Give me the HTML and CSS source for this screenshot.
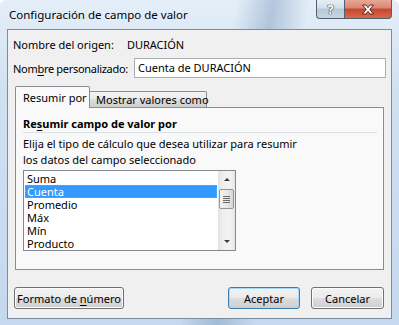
FILE: index.html
```html
<!DOCTYPE html>
<html lang="es">
<head>
    <meta charset="UTF-8">
    <title>Configuración de campo de valor</title>
    <link rel="stylesheet" href="styles.css">
</head>
<body>
  <div class="window">
    <div class="titlebar">
      <span class="title">Configuración de campo de valor</span>
      <div class="caption">
        <div class="cap help">?</div>
        <div class="cap close">
          <svg width="14" height="11" viewBox="0 0 14 11">
            <path d="M1.5 1 L5 1 L7 3.6 L9 1 L12.5 1 L8.8 5.5 L12.5 10 L9 10 L7 7.4 L5 10 L1.5 10 L5.2 5.5 Z" fill="#fff" stroke="#5a2a22" stroke-width="1"/>
          </svg>
        </div>
      </div>
    </div>

    <div class="client">
      <div class="row origin">
        <span>Nombre del origen:</span>
        <span class="value">DURACIÓN</span>
      </div>
      <div class="row custom">
        <span class="label">Nom<u>b</u>re personalizado:</span>
        <div class="input">Cuenta de DURACIÓN</div>
      </div>

      <div class="tabbox">
        <div class="tabs">
          <div class="tab active">Resumir por</div>
          <div class="tab">Mostrar valores como</div>
        </div>
        <div class="panel">
          <div class="heading"><span>Re<u>s</u>umir campo de valor por</span></div>
          <p class="desc">Elija el tipo de cálculo que desea utilizar para resumir<br>los datos del campo seleccionado</p>
          <div class="list">
            <ul class="items">
              <li>Suma</li>
              <li class="selected">Cuenta</li>
              <li>Promedio</li>
              <li>Máx</li>
              <li>Mín</li>
              <li>Producto</li>
            </ul>
            <div class="scrollbar">
              <div class="arrow up"></div>
              <div class="track">
                <div class="thumb"><span></span><span></span><span></span><span></span></div>
              </div>
              <div class="arrow down"></div>
            </div>
          </div>
        </div>
      </div>

      <div class="buttons">
        <div class="btn format"><span>Formato de <u>n</u>úmero</span></div>
        <div class="btn ok">Aceptar</div>
        <div class="btn cancel">Cancelar</div>
      </div>
    </div>
  </div>
</body>
</html>
```

FILE: styles.css
```css
body {
  margin: 0;
  padding: 0;
  font-family: "Noto Sans", "Segoe UI", sans-serif;
  font-size: 11px;
  color: #000;
  white-space: nowrap;
}

u {
  text-underline-offset: 2px;
}

.window {
  width: 399px;
  height: 325px;
  box-sizing: border-box;
  padding: 0 7px 6px;
  display: flex;
  flex-direction: column;
  border-radius: 6px 6px 0 0;
  background:
    linear-gradient(100deg, rgba(255,255,255,0) 52%, rgba(120,150,185,0.45) 60%, rgba(255,255,255,0) 68%),
    linear-gradient(180deg, #e4eef8 0%, #cfe0f1 30%, #c4d8ee 100%);
}

/* title bar */
.titlebar {
  height: 29px;
  display: flex;
  align-items: center;
}

.title {
  padding-left: 2px;
  padding-bottom: 1px;
  font-size: 11.5px;
}

.caption {
  margin-left: auto;
  align-self: flex-start;
  display: flex;
}

.cap {
  height: 19px;
  box-sizing: border-box;
  border: 1px solid #50606f;
  border-top: none;
  display: flex;
  align-items: center;
  justify-content: center;
}

.help {
  width: 28px;
  border-radius: 0 0 0 4px;
  border-right: none;
  background: linear-gradient(#e6eef7 0%, #d3dfeb 45%, #b7c8da 50%, #c8d6e4 100%);
  color: #fff;
  font-weight: bold;
  font-size: 13px;
  text-shadow: 0 0 1px #333, 0 0 1px #333, 0 0 1px #333;
}

.close {
  width: 48px;
  border-radius: 0 0 4px 0;
  background: linear-gradient(#e8a796 0%, #d98672 45%, #c8442c 50%, #d66a4c 100%);
}

/* client area */
.client {
  flex: 1;
  border: 1px solid #7a8c9f;
  background: #f0f0f0;
  padding: 6px 7px 8px 5px;
  display: flex;
  flex-direction: column;
}

.row {
  display: flex;
  align-items: center;
}

.origin {
  height: 16px;
}

.origin .value {
  margin-left: 13px;
}

.custom {
  margin-top: 6px;
  margin-right: -2px;
}

.custom .label {
  letter-spacing: -0.3px;
}

.input {
  margin-left: auto;
  flex-shrink: 0;
  width: 252px;
  height: 20px;
  box-sizing: border-box;
  border: 1px solid #abadb3;
  background: #fff;
  padding-left: 3px;
  line-height: 18px;
}

/* tabs */
.tabbox {
  margin-top: 8px;
  margin-left: 2px;
}

.tabs {
  display: flex;
  align-items: flex-end;
  height: 21px;
}

.tab {
  box-sizing: border-box;
  border: 1px solid #898c95;
  border-bottom: none;
}

.tab.active {
  position: relative;
  z-index: 1;
  width: 75px;
  height: 22px;
  margin-bottom: -1px;
  background: #f9f9f9;
  padding: 3px 0 0 7px;
  border-radius: 2px 2px 0 0;
}

.tab:not(.active) {
  width: 117px;
  height: 16px;
  border-left: none;
  padding-left: 6px;
  line-height: 15px;
  background: linear-gradient(#f3f3f3 0%, #ebebeb 50%, #dddddd 50%, #cfcfcf 100%);
  border-radius: 0 2px 0 0;
}

.panel {
  height: 163px;
  box-sizing: border-box;
  border: 1px solid #898c95;
  background: #f9f9f9;
  padding: 8px 6px 0 7px;
}

.heading {
  font-weight: bold;
  line-height: 16px;
  border-bottom: 1px solid #d8e1e8;
}

.desc {
  margin: 3px 0 0;
  line-height: 16px;
}

/* listbox */
.list {
  display: flex;
  width: 213px;
  height: 81px;
  box-sizing: border-box;
  margin-top: 2px;
  border: 1px solid #828790;
  background: #fff;
}

.items {
  flex: 1;
  list-style: none;
  margin: 0;
  padding: 1px;
}

.items li {
  height: 13px;
  line-height: 13px;
  padding-left: 2px;
}

.items li.selected {
  background: #3399ff;
  color: #fff;
  outline: 1px dotted #e0902c;
  outline-offset: -1px;
}

.scrollbar {
  width: 17px;
  display: flex;
  flex-direction: column;
  background: linear-gradient(90deg, #e2e2e2 0%, #efefef 30%, #f2f2f2 70%, #e6e6e6 100%);
}

.arrow {
  height: 17px;
  display: flex;
  align-items: center;
  justify-content: center;
}

.arrow::before {
  content: "";
  border-left: 3px solid transparent;
  border-right: 3px solid transparent;
}

.arrow.up::before {
  border-bottom: 3px solid #3c3c3c;
}

.arrow.down::before {
  border-top: 3px solid #3c3c3c;
}

.track {
  flex: 1;
}

.thumb {
  width: 15px;
  height: 20px;
  margin: 1px 0 0 1px;
  box-sizing: border-box;
  border: 1px solid #959595;
  border-radius: 2px;
  background: linear-gradient(90deg, #f3f3f3 0%, #e8e8e8 50%, #d6d6d6 100%);
  display: flex;
  flex-direction: column;
  justify-content: center;
  align-items: center;
  gap: 1px;
}

.thumb span {
  width: 7px;
  height: 1px;
  background: #6e6e6e;
}

/* buttons */
.buttons {
  display: flex;
  margin-top: 17px;
}

.btn {
  height: 22px;
  box-sizing: border-box;
  border: 1px solid #707070;
  border-radius: 3px;
  background: linear-gradient(#f2f2f2 0%, #ebebeb 50%, #dddddd 50%, #cfcfcf 100%);
  display: flex;
  align-items: center;
  justify-content: center;
  box-shadow: inset 0 0 0 1px #fcfcfc;
}

.format {
  width: 110px;
  margin-left: 1px;
}

.ok {
  width: 72px;
  margin-left: auto;
  border-color: #3c7fb1;
  box-shadow: inset 0 0 0 1px #a7d8f6;
}

.cancel {
  width: 73px;
  margin-left: 11px;
}
```
